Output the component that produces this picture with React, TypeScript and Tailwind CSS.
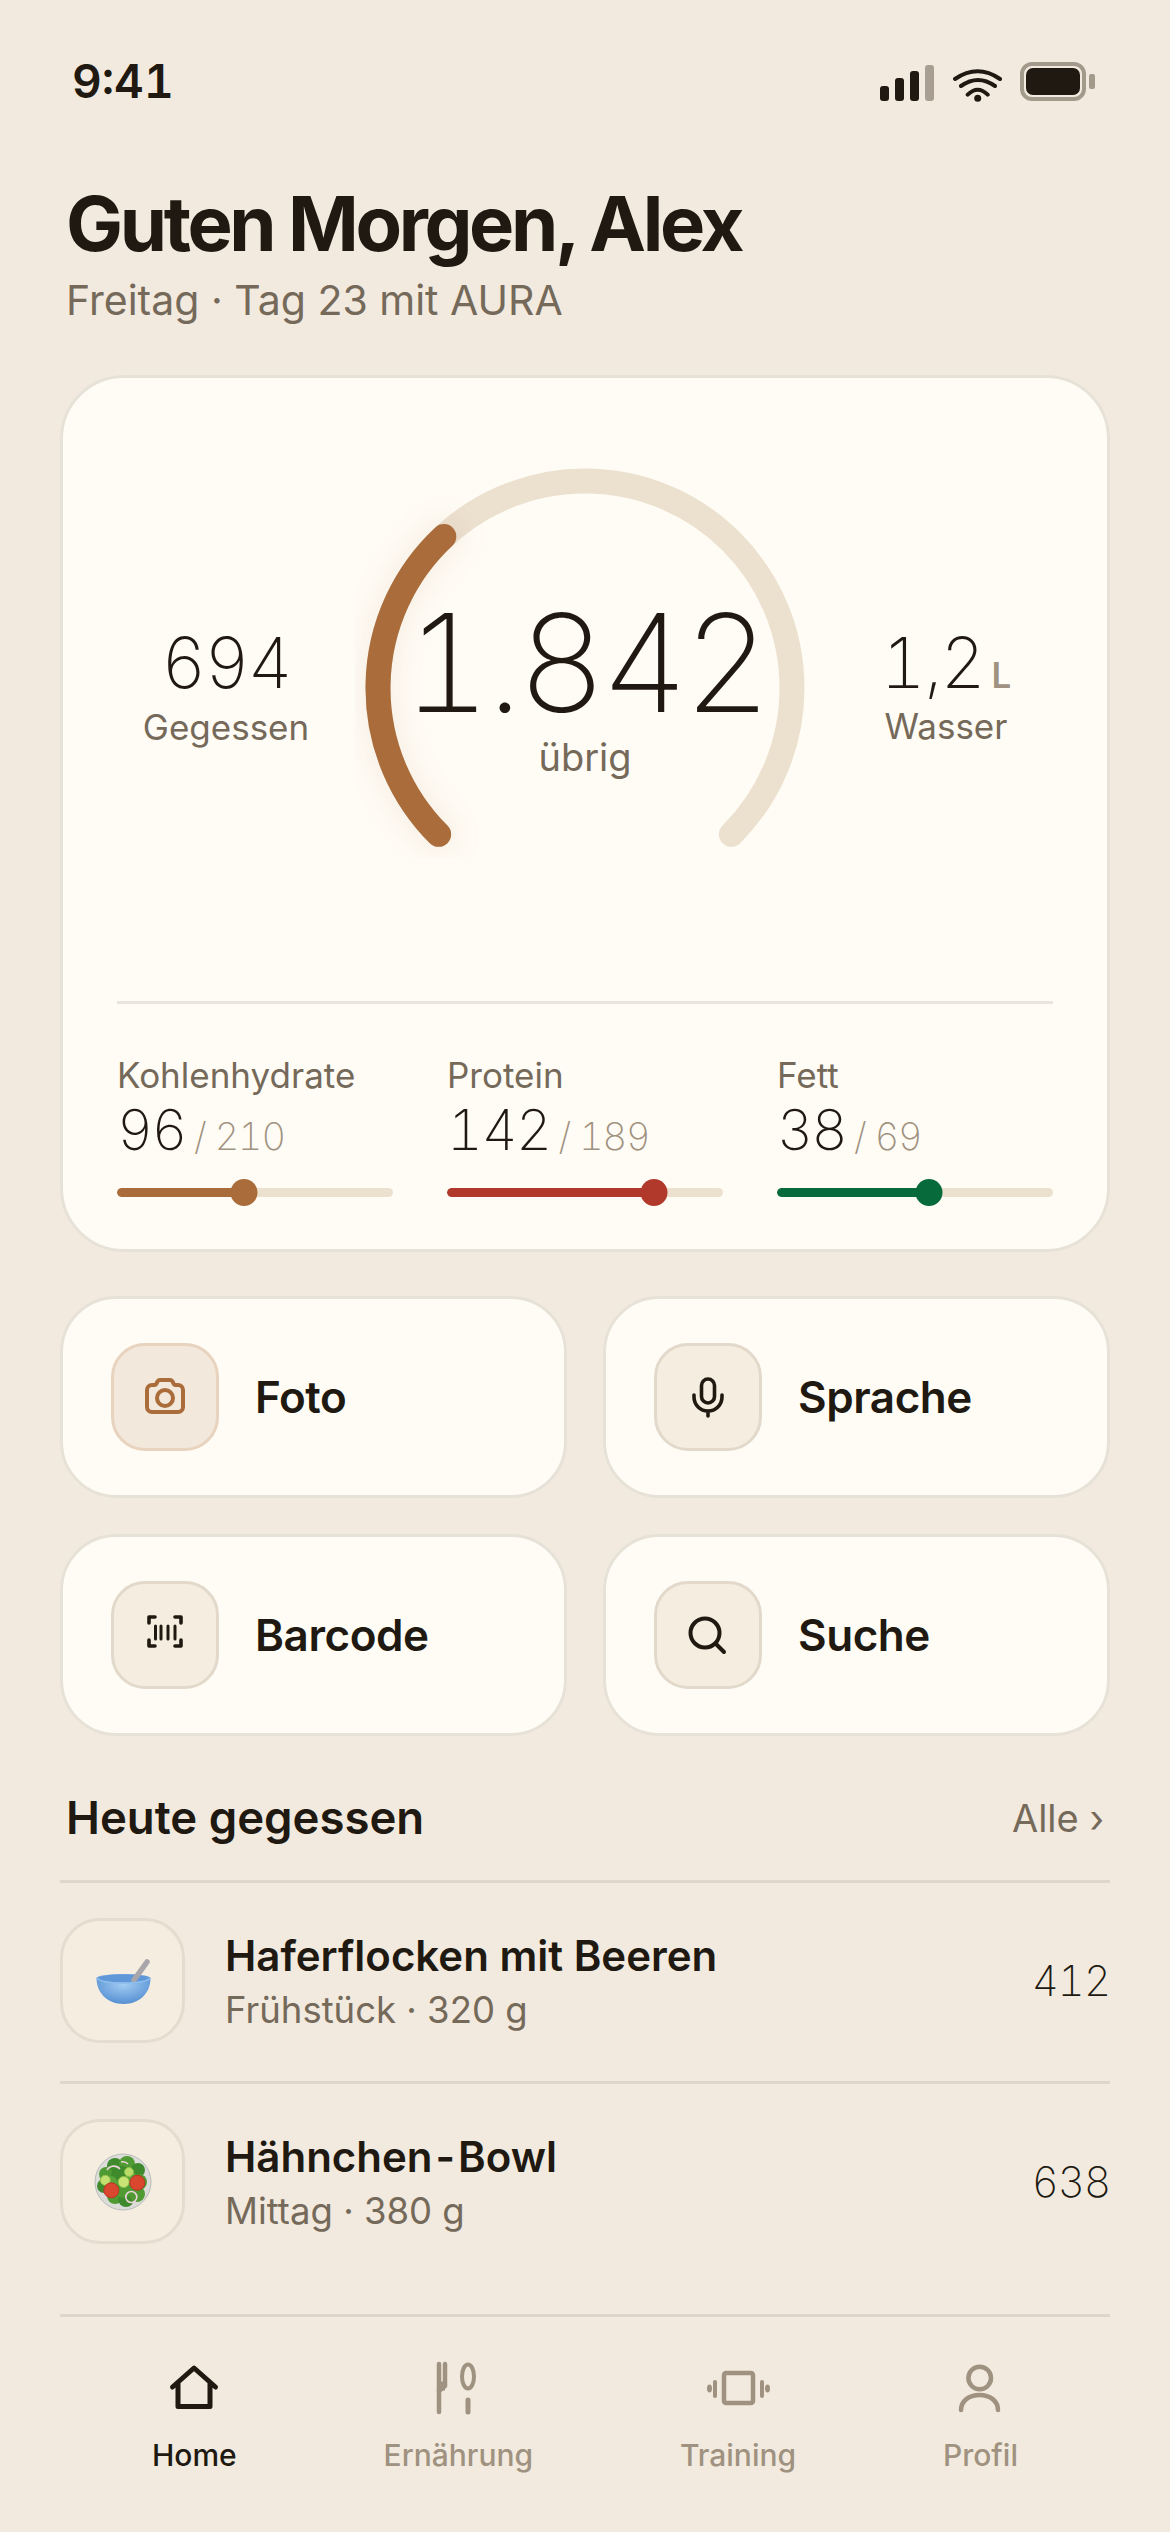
import React from "react";

const macros = [
  { label: "Kohlenhydrate", value: "96", goal: "/ 210", pct: 46, color: "bg-[#a96c3a]" },
  { label: "Protein", value: "142", goal: "/ 189", pct: 75, color: "bg-[#b0392b]" },
  { label: "Fett", value: "38", goal: "/ 69", pct: 55, color: "bg-[#066a3a]" },
];

function polar(deg: number, r = 207) {
  const a = (deg * Math.PI) / 180;
  return [230 + r * Math.sin(a), 230 - r * Math.cos(a)];
}
function arc(from: number, to: number) {
  const [x1, y1] = polar(from);
  const [x2, y2] = polar(to);
  const large = to - from > 180 ? 1 : 0;
  return `M${x1} ${y1}A207 207 0 ${large} 1 ${x2} ${y2}`;
}

function Gauge() {
  return (
    <div className="relative w-[460px] h-[400px]">
      <svg width="460" height="400" viewBox="0 0 460 400" fill="none">
        <path d={arc(-135, 135)} stroke="#ece1cf" strokeWidth="25" strokeLinecap="round" />
        <path d={arc(-135, -43)} stroke="#a96c3a" strokeOpacity="0.08" strokeWidth="40" strokeLinecap="round" className="blur-md" />
        <path d={arc(-135, -43)} stroke="#a96c3a" strokeWidth="25" strokeLinecap="round" />
      </svg>
      <div className="absolute left-0 right-0 top-[137px] flex flex-col items-center">
        <div className="text-[136px] leading-[136px] font-extralight tabular-nums text-[#201911] tracking-[-0.037em]">1.842</div>
        <div className="mt-[4px] text-[38px] leading-[44px] text-[#75695a]">übrig</div>
      </div>
    </div>
  );
}

function CameraIcon() {
  return (
    <svg width="60" height="60" viewBox="0 0 60 60" fill="none" stroke="#a96c3a" strokeWidth="4" strokeLinejoin="round">
      <path d="M17 18h2.5c1 0 1.5-.5 2-1.5l1-2c.5-1 1-1.5 2-1.5h11c1 0 1.5.5 2 1.5l1 2c.5 1 1 1.5 2 1.5H43a5 5 0 0 1 5 5v17a5 5 0 0 1-5 5H17a5 5 0 0 1-5-5V23a5 5 0 0 1 5-5Z" />
      <circle cx="30" cy="31" r="8" />
    </svg>
  );
}
function MicIcon() {
  return (
    <svg width="60" height="60" viewBox="0 0 60 60" fill="none" stroke="#201911" strokeWidth="3.6" strokeLinecap="round">
      <rect x="23.5" y="12" width="13" height="24" rx="6.5" />
      <path d="M16 28v2a14 14 0 0 0 28 0v-2M30 44v5" />
    </svg>
  );
}
function BarcodeIcon() {
  return (
    <svg width="60" height="60" viewBox="0 0 60 60" fill="none" stroke="#201911" strokeWidth="3.6" strokeLinecap="round" strokeLinejoin="round">
      <path d="M14 18v-6h6M40 12h6v6M46 35v6h-6M20 41h-6v-6" />
      <path d="M20.5 21v13M26 21v13M33 21v13M40 21v13" strokeWidth="3" />
    </svg>
  );
}
function SearchIcon() {
  return (
    <svg width="60" height="60" viewBox="0 0 60 60" fill="none" stroke="#201911" strokeWidth="4" strokeLinecap="round">
      <circle cx="27" cy="28" r="14.5" />
      <path d="M38 39l8 8" />
    </svg>
  );
}

function BowlEmoji() {
  return (
    <svg width="60" height="60" viewBox="0 0 60 60" fill="none">
      <defs>
        <radialGradient id="bowl" cx="50%" cy="35%" r="70%">
          <stop offset="0%" stopColor="#a3cdf3" />
          <stop offset="100%" stopColor="#4f8ad0" />
        </radialGradient>
      </defs>
      <path d="M3.500 27c0-2 12-4 27-4s27 2 27 4c0 15-11 26-27 26S3.500 42 3.500 27Z" fill="url(#bowl)" />
      <ellipse cx="30.500" cy="27.500" rx="25" ry="4" fill="#5f97d8" />
      <path d="M54 11L41 29" stroke="#a9a6ab" strokeWidth="5.500" strokeLinecap="round" />
      <path d="M3.500 27c3 3.500 14 5 27 5s24-1.500 27-5" stroke="#8dbdec" strokeWidth="1.500" />
    </svg>
  );
}
function SaladEmoji() {
  const leaves: [number, number, number, string][] = [
    [22, 14, 8, "#3f8a2c"], [34, 12, 8, "#4f9a32"], [45, 18, 7, "#3f8a2c"], [13, 22, 7, "#4f9a32"],
    [28, 24, 10, "#3f8a2c"], [46, 30, 8, "#4f9a32"], [11, 34, 7, "#3f8a2c"], [22, 44, 8, "#4f9a32"],
    [33, 47, 8, "#3f8a2c"], [44, 42, 8, "#4f9a32"], [30, 36, 10, "#4f9a32"], [18, 30, 6, "#5aa63a"],
    [38, 26, 6, "#5aa63a"],
  ];
  return (
    <svg width="60" height="60" viewBox="0 0 60 60" fill="none">
      <circle cx="30" cy="30" r="28" fill="#dcdddb" stroke="#b8bbb8" strokeWidth="1" />
      {leaves.map(([x, y, r, c], i) => (
        <circle key={i} cx={x} cy={y} r={r} fill={c} />
      ))}
      <circle cx="12.300" cy="28.300" r="5" fill="#c2e070" stroke="#8cc04a" />
      <circle cx="30.700" cy="30" r="5.500" fill="#c8e474" stroke="#8cc04a" />
      <circle cx="36" cy="20" r="4.500" fill="#bcdc6a" stroke="#8cc04a" />
      <circle cx="44.300" cy="30.700" r="7.500" fill="#d9472f" stroke="#b93524" />
      <circle cx="18.300" cy="38.300" r="7.500" fill="#d9472f" stroke="#b93524" />
      <circle cx="38.300" cy="45" r="5.500" stroke="#ecd4da" strokeWidth="1.600" />
      <path d="M14 18a8 8 0 0 1 13-1M28 10a7 7 0 0 1 7 2" stroke="#ecd4da" strokeWidth="1.600" />
    </svg>
  );
}

function ActionCard({ label, icon, accent }: { label: string; icon: React.ReactNode; accent?: boolean }) {
  return (
    <div className="h-[202px] rounded-[56px] bg-[#fffcf5] border-[3px] border-[#e7e2d8] flex items-center pl-[48px] gap-[36px]">
      <div
        className={
          accent
            ? "w-[108px] h-[108px] rounded-[34px] border-[3px] border-[#e8d3bf] bg-[#f3e8dc] flex items-center justify-center"
            : "w-[108px] h-[108px] rounded-[34px] border-[3px] border-[#e2d9cb] bg-[#f5eee0] flex items-center justify-center"
        }
      >
        {icon}
      </div>
      <span className="text-[44px] leading-[56px] font-semibold tracking-[-0.01em] text-[#201911]">{label}</span>
    </div>
  );
}

function FoodRow({ emoji, title, sub, kcal }: { emoji: React.ReactNode; title: React.ReactNode; sub: string; kcal: string }) {
  return (
    <div className="border-t-[3px] border-[#ded6c9] pt-[35px] pb-[38px] flex items-center">
      <div className="w-[125px] h-[125px] rounded-[40px] border-[3px] border-[#e4dccf] bg-[#f5eee0] flex items-center justify-center">
        {emoji}
      </div>
      <div className="ml-[40px] flex-1">
        <div className="text-[42px] leading-[56px] font-semibold text-[#201911]">{title}</div>
        <div className="text-[36.500px] leading-[46px] text-[#75695a] mt-[3px]">{sub}</div>
      </div>
      <div className="text-[42px] leading-[50px] font-extralight tabular-nums tracking-[-0.025em] text-[#201911]">{kcal}</div>
    </div>
  );
}

function NavItem({ label, icon, active }: { label: string; icon: React.ReactNode; active?: boolean }) {
  return (
    <div className="flex flex-col items-center gap-[17px]">
      <div className="w-[60px] h-[60px]">{icon}</div>
      <span className={active ? "text-[30px] leading-[40px] font-medium text-[#201911]" : "text-[30px] leading-[40px] font-medium text-[#9f9280]"}>
        {label}
      </span>
    </div>
  );
}

export default function App() {
  return (
    <div className="w-[1170px] h-[2532px] bg-[#f2eadf] overflow-hidden font-['Inter',sans-serif] text-[#201911]">
      {/* status bar */}
      <div className="flex items-center justify-between pl-[72px] pr-[75px] pt-[53px] h-[109px]">
        <span className="text-[46px] leading-[56px] font-semibold tabular-nums">9:41</span>
        <div className="flex items-center">
          <div className="flex items-end gap-[6px] h-[36px] mt-[4px]">
            <div className="w-[9px] h-[15px] rounded-[3px] bg-[#201911]" />
            <div className="w-[9px] h-[23px] rounded-[3px] bg-[#201911]" />
            <div className="w-[9px] h-[30px] rounded-[3px] bg-[#201911]" />
            <div className="w-[9px] h-[36px] rounded-[3px] bg-[#a89f92]" />
          </div>
          <svg width="54" height="40" viewBox="0 0 54 40" fill="none" stroke="#201911" strokeWidth="4" strokeLinecap="round" className="ml-[17px] mt-[4px]">
            <path d="M4 16Q26.7.6 49 16M10 23Q27 11 44 23M16.7 31.700Q26.700 21.700 36.700 31.700" />
            <circle cx="26.700" cy="35.300" r="3.500" fill="#201911" stroke="none" />
          </svg>
          <div className="ml-[15px] w-[66px] h-[39px] rounded-[12px] border-[4px] border-[#a39a8c] p-[2px]">
            <div className="w-full h-full rounded-[7px] bg-[#201911]" />
          </div>
          <div className="ml-[3px] w-[6px] h-[15px] rounded-[2px] bg-[#a39a8c]" />
        </div>
      </div>

      {/* greeting */}
      <div className="pl-[66px] mt-[69px]">
        <h1 className="text-[76px] leading-[90px] font-bold tracking-[-0.044em] text-[#201911]">Guten Morgen, Alex</h1>
        <p className="text-[41px] leading-[50px] text-[#75695a] mt-[7px]">Freitag · Tag 23 mit AURA</p>
      </div>

      <div className="px-[60px]">
        {/* main card */}
        <div className="mt-[50px] rounded-[64px] bg-[#fffcf5] border-[3px] border-[#e7e2d8] px-[54px] pt-[80px] pb-[43px]">
          <div className="flex items-start justify-between">
            <div className="w-[218px] pt-[170px] flex flex-col items-center">
              <div className="text-[70px] leading-[70px] font-extralight tabular-nums tracking-[-0.03em]">694</div>
              <div className="mt-[9px] text-[35px] leading-[40px] text-[#75695a]">Gegessen</div>
            </div>
            <Gauge />
            <div className="w-[218px] pl-[4px] pt-[170px] flex flex-col items-center">
              <div className="h-[70px] flex items-baseline gap-[8px]">
                <span className="text-[70px] leading-[70px] font-extralight tabular-nums tracking-[-0.03em]">1,2</span>
                <span className="text-[35px] leading-[40px] font-semibold text-[#9f9280]">L</span>
              </div>
              <div className="mt-[8px] text-[35px] leading-[40px] text-[#75695a]">Wasser</div>
            </div>
          </div>

          <div className="mt-[143px] h-[3px] bg-[#e9e5dd]" />

          <div className="mt-[49px] grid grid-cols-3 gap-[54px]">
            {macros.map((m) => (
              <div key={m.label}>
                <div className="text-[35px] leading-[44px] text-[#75695a]">{m.label}</div>
                <div className="mt-[5px] h-[56px] flex items-baseline gap-[8px] leading-[56px]">
                  <span className="text-[56px] font-extralight tabular-nums tracking-[-0.03em] text-[#201911]">{m.value}</span>
                  <span className="text-[38px] font-extralight tabular-nums tracking-[-0.03em] text-[#9f9280]">{m.goal}</span>
                </div>
                <div className="relative mt-[21px] h-[27px] flex items-center">
                  <div className="w-full h-[9px] rounded-full bg-[#ece1cf] overflow-hidden">
                    <div className={`h-full rounded-full ${m.color}`} style={{ width: `${m.pct}%` }} />
                  </div>
                  <div
                    className={`absolute top-0 w-[27px] h-[27px] rounded-full -translate-x-1/2 ${m.color}`}
                    style={{ left: `${m.pct}%` }}
                  />
                </div>
              </div>
            ))}
          </div>
        </div>

        {/* actions */}
        <div className="mt-[44px] grid grid-cols-2 gap-[36px]">
          <ActionCard label="Foto" icon={<CameraIcon />} accent />
          <ActionCard label="Sprache" icon={<MicIcon />} />
          <ActionCard label="Barcode" icon={<BarcodeIcon />} />
          <ActionCard label="Suche" icon={<SearchIcon />} />
        </div>

        {/* today */}
        <div className="mt-[54px] flex items-center justify-between pl-[6px] pr-[6px] mb-[34px]">
          <h2 className="text-[45.500px] leading-[56px] font-semibold text-[#201911]">Heute gegessen</h2>
          <span className="text-[38px] leading-[56px] text-[#75695a]">Alle ›</span>
        </div>
        <FoodRow emoji={<BowlEmoji />} title="Haferflocken mit Beeren" sub="Frühstück · 320 g" kcal="412" />
        <FoodRow
          emoji={<SaladEmoji />}
          title={
            <>
              Hähnchen<span className="mx-[3px]">-</span>Bowl
            </>
          }
          sub="Mittag · 380 g"
          kcal="638"
        />

        {/* nav */}
        <div className="mt-[32px] border-t-[3px] border-[#ded6c9] pt-[41px] px-[92px] flex justify-between">
          <NavItem
            active
            label="Home"
            icon={
              <svg width="60" height="60" viewBox="0 0 60 60" fill="none" stroke="#201911" strokeWidth="5" strokeLinecap="round" strokeLinejoin="round">
                <path d="M8.500 29L30 10l21.500 19M14 25v23.500h32V25" />
              </svg>
            }
          />
          <NavItem
            label="Ernährung"
            icon={
              <svg width="60" height="60" viewBox="0 0 60 60" fill="none" stroke="#9f9280" strokeLinecap="round">
                <path d="M11 6v48" strokeWidth="4.500" />
                <path d="M17 6v22l-6 5" strokeWidth="4.500" strokeLinejoin="round" />
                <path d="M11 28h6" strokeWidth="9" strokeLinecap="butt" />
                <ellipse cx="40" cy="18.500" rx="6" ry="12" strokeWidth="4" />
                <path d="M40 42v12" strokeWidth="5" />
              </svg>
            }
          />
          <NavItem
            label="Training"
            icon={
              <svg width="60" height="60" viewBox="0 0 60 60" fill="none" stroke="#9f9280" strokeWidth="4" strokeLinecap="round" className="overflow-visible">
                <rect x="16" y="15" width="29" height="30" rx="2" strokeWidth="4.500" />
                <path d="M7 24v14M54 24v14" />
                <ellipse cx="1.500" cy="30.500" rx="2.500" ry="4" fill="#9f9280" stroke="none" />
                <ellipse cx="59.500" cy="30.500" rx="2.500" ry="4" fill="#9f9280" stroke="none" />
              </svg>
            }
          />
          <NavItem
            label="Profil"
            icon={
              <svg width="60" height="60" viewBox="0 0 60 60" fill="none" stroke="#9f9280" strokeWidth="4.500" strokeLinecap="round">
                <circle cx="29.700" cy="20" r="11.300" />
                <path d="M11 52c0-9 8-15 18.500-15S48 43 48 52" />
              </svg>
            }
          />
        </div>
      </div>
    </div>
  );
}
